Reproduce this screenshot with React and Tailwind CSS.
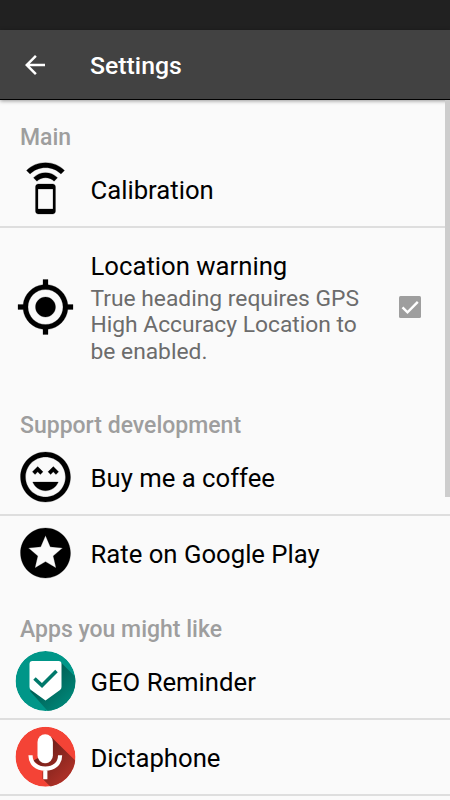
import React from "react";

const paths = {
  phone: [
    "M7.2 7.47L8.55 8.9c.91-.91 2.1-1.4 3.45-1.4s2.54.49 3.45 1.4L16.8 7.47C15.55 6.2 13.9 5.45 12 5.45s-3.55.75-4.8 2.02zM12 1.45C9 1.45 6.35 2.6 4.4 4.58l1.41 1.45C7.4 4.4 9.55 3.45 12 3.45s4.6.95 6.19 2.58l1.41-1.45C17.65 2.6 15 1.45 12 1.45z",
    "M14.86 10.01L9.14 10C8.51 10 8 10.51 8 11.14v9.71c0 .63.51 1.14 1.14 1.14h5.71c.63 0 1.14-.51 1.14-1.14v-9.71c.01-.63-.5-1.13-1.13-1.13zM15 20H9v-8h6v8z",
  ].join(""),
  location:
    "M12 8c-2.21 0-4 1.79-4 4s1.79 4 4 4 4-1.79 4-4-1.79-4-4-4zm8.94 3c-.46-4.17-3.77-7.48-7.94-7.94V1h-2v2.06C6.83 3.52 3.52 6.83 3.06 11H1v2h2.06c.46 4.17 3.77 7.48 7.94 7.94V23h2v-2.06c4.17-.46 7.48-3.77 7.94-7.94H23v-2h-2.06zM12 19c-3.87 0-7-3.13-7-7s3.13-7 7-7 7 3.13 7 7-3.13 7-7 7z",
  smile:
    "M11.99 2C6.47 2 2 6.47 2 12s4.47 10 9.99 10S22 17.53 22 12 17.52 2 11.99 2zM12 20c-4.42 0-8-3.58-8-8s3.58-8 8-8 8 3.58 8 8-3.58 8-8 8zm1-10.06L14.06 11l1.06-1.06L16.18 11l1.06-1.06-2.12-2.12zm-4.12 0L9.94 11 11 9.94 8.88 7.82 6.76 9.94 7.82 11zM12 17.5c2.33 0 4.31-1.46 5.11-3.5H6.89c.8 2.04 2.78 3.5 5.11 3.5z",
  star:
    "M11.99 2C6.47 2 2 6.48 2 12s4.47 10 9.99 10C17.52 22 22 17.52 22 12S17.52 2 11.99 2zm4.24 16L12 15.45 7.77 18l1.12-4.81-3.73-3.23 4.92-.42L12 5l1.92 4.53 4.92.42-3.73 3.23L16.23 18z",
};

function Glyph({ name }) {
  return (
    <svg viewBox="-0.2 0 24 24" className="size-[60px] shrink-0 fill-black">
      <path d={paths[name]} stroke="#000" strokeWidth="0.1" />
    </svg>
  );
}

function GeoIcon() {
  return (
    <svg viewBox="-0.5 0 60 60" className="size-[60px] shrink-0 overflow-visible">
      <defs>
        <clipPath id="geoClip">
          <circle cx="30" cy="30" r="30" />
        </clipPath>
        <linearGradient id="geoShade" gradientUnits="userSpaceOnUse" x1="25" y1="25" x2="52" y2="52">
          <stop offset="0" stopColor="#00594f" />
          <stop offset="1" stopColor="#008577" />
        </linearGradient>
      </defs>
      <g clipPath="url(#geoClip)">
        <circle cx="30" cy="30" r="30" fill="#009688" />
        <path d="M45 11L75 41V78H48L14.500 40z" fill="url(#geoShade)" />
      </g>
      <path
        d="M17 10H43Q46 10 46 13V36Q46 38 44.500 39L30 49.500L15.500 39Q14 38 14 36V13Q14 10 17 10z"
        fill="#fff"
      />
      <path d="M19 27.500L26.500 34.500L41 20" fill="none" stroke="#00796b" strokeWidth="3.600" />
    </svg>
  );
}

function MicIcon() {
  return (
    <svg viewBox="-0.5 0.3 60 60" className="size-[60px] shrink-0 overflow-visible">
      <defs>
        <clipPath id="micClip">
          <circle cx="30" cy="30" r="30" />
        </clipPath>
        <linearGradient id="micShade" gradientUnits="userSpaceOnUse" x1="24" y1="22" x2="50" y2="48">
          <stop offset="0" stopColor="#6d1d18" />
          <stop offset="1" stopColor="#a82f26" />
        </linearGradient>
      </defs>
      <g clipPath="url(#micClip)">
        <circle cx="30" cy="30" r="30" fill="#f44336" />
        <path d="M35.500 10L66 40V70H45L27 52V41L17.500 34L23 31z" fill="url(#micShade)" />
        <path d="M14.500 29C14.500 36 22 42 30 42L26 46L17 38z" fill="#f44336" />
      </g>
      <rect x="22" y="7.500" width="15.400" height="29" rx="7.700" fill="#fff" />
      <path d="M15 28.500C15 37 21.300 42 29.800 42S44.600 37 44.600 28.500M29.800 42V52.500" fill="none" stroke="#fff" strokeWidth="4.200" />
    </svg>
  );
}

function Category({ children }) {
  return (
    <h2 className="h-[52px] pt-[23px] pl-5 text-[23px] leading-[30px] font-medium text-[#9e9e9e]">
      {children}
    </h2>
  );
}

function Row({ icon, title, divider = true }) {
  return (
    <div
      className={
        "flex h-[76px] items-center gap-[15.500px] border-b-2 pl-[15px] " +
        (divider ? "border-[#dedede]" : "border-transparent")
      }
    >
      {icon}
      <span className="pt-px text-[25.700px] leading-[30px] whitespace-nowrap">{title}</span>
    </div>
  );
}

export default function App() {
  return (
    <div
      className="flex h-[800px] w-[450px] flex-col overflow-hidden bg-[#fafafa] text-black"
      style={{ fontFamily: 'Roboto, "Liberation Sans", sans-serif' }}
    >
      <div className="h-[30px] shrink-0 bg-[#212121]" />
      <header className="z-10 flex h-[70px] shrink-0 items-center border-b border-black bg-[#424242] text-white shadow-[0_1px_4px_rgba(0,0,0,0.4)]">
        <svg viewBox="0 0 24 24" className="ml-[20px] size-[30px] shrink-0 fill-white">
          <path d="M20 11H7.830l5.590-5.590L12 4l-8 8 8 8 1.410-1.410L7.830 13H20v-2z" />
        </svg>
        <h1 className="ml-10 pt-[3px] text-[24.800px] leading-[32px] font-medium">Settings</h1>
      </header>
      <main className="flex min-h-0 flex-1">
        <div className="w-[445px] shrink-0">
          <div className="w-[450px]">
            <Category>Main</Category>
            <Row icon={<Glyph name="phone" />} title="Calibration" />
            <div className="flex h-40 items-center pb-[2px] pl-[15px]">
              <Glyph name="location" />
              <div className="ml-[15.500px] w-[290px] pt-[3px]">
                <div className="mb-[5px] text-[25.700px] leading-[29px]">Location warning</div>
                <p className="text-[22.800px] leading-[26.600px] text-[#6c6c6c]">
                  True heading requires GPS
                  <br />
                  High Accuracy Location to
                  <br />
                  be enabled.
                </p>
              </div>
              <svg viewBox="0 0 22 22" className="ml-[18px] size-[22px] shrink-0">
                <rect width="22" height="22" rx="1.500" fill="#9e9e9e" />
                <path d="M3.500 11.300L8.500 16.300L18.800 5.800" fill="none" stroke="#fff" strokeWidth="2.400" />
              </svg>
            </div>
            <Category>Support development</Category>
            <Row icon={<Glyph name="smile" />} title="Buy me a coffee" />
            <Row icon={<Glyph name="star" />} title="Rate on Google Play" divider={false} />
            <Category>Apps you might like</Category>
            <Row icon={<GeoIcon />} title="GEO Reminder" />
            <Row icon={<MicIcon />} title="Dictaphone" />
          </div>
        </div>
        <div className="z-10 h-[397px] w-[5px] shrink-0 bg-[#cdcdcd]" />
      </main>
    </div>
  );
}
